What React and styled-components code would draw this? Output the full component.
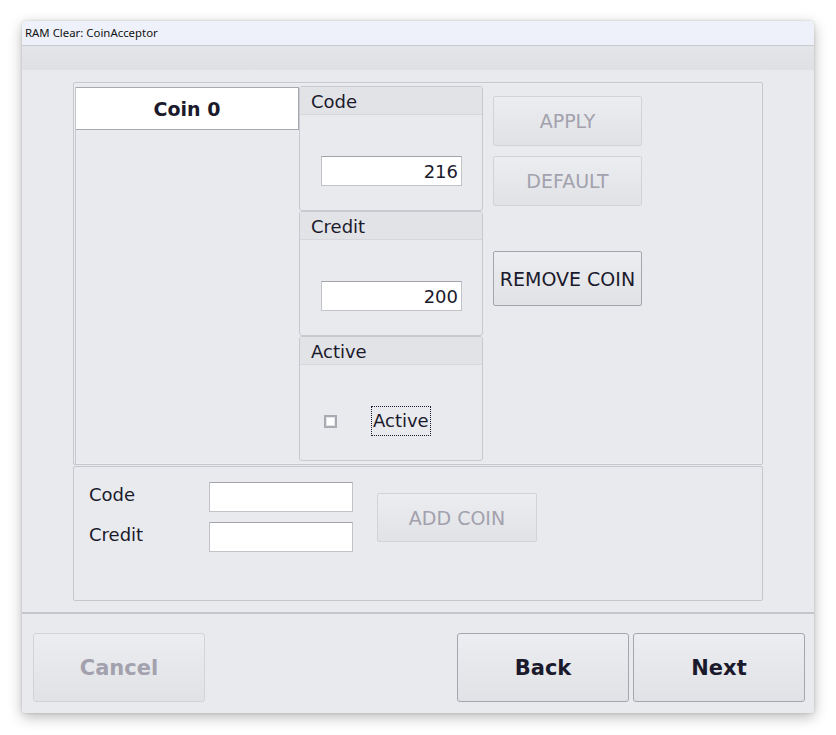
import React from 'react'
import styled, {createGlobalStyle, css} from 'styled-components'

const Global = createGlobalStyle`
  html, body {
    margin: 0;
    background: #ffffff;
  }
  * {
    box-sizing: border-box;
  }
`

const Page = styled.div`
  padding: 21px 22px;
  font-family: "DejaVu Sans", Verdana, sans-serif;
  color: #1b1a2c;
`

const Window = styled.div`
  width: 792px;
  height: 692px;
  background: #e9eaee;
  border-radius: 4px 4px 2px 2px;
  box-shadow: 0 4px 14px rgba(0, 0, 0, 0.28), 0 0 3px rgba(0, 0, 0, 0.15);
  display: flex;
  flex-direction: column;
  overflow: hidden;
`

const TitleBar = styled.div`
  height: 25px;
  flex: none;
  background: #eef1fa;
  border-bottom: 1px solid #c9cad0;
  font-family: "Noto Sans", "Open Sans", sans-serif;
  font-size: 11.4px;
  line-height: 24px;
  padding-left: 3px;
  color: #111;
`

const Band = styled.div`
  height: 24px;
  flex: none;
  background: linear-gradient(#e4e5e9, #dfe0e4);
`

const Body = styled.div`
  flex: 1;
  padding: 12px 51px 0;
  display: flex;
  flex-direction: column;
`

const TopPanel = styled.div`
  height: 383px;
  flex: none;
  border: 1px solid #c6c7cd;
  border-radius: 2px;
  box-shadow: inset 0 0 0 1px #eceef1;
  padding: 3px 1px 0 1px;
  display: grid;
  grid-template-columns: 224px 184px 1fr;
  align-items: start;
`

const CoinList = styled.div`
  margin-top: 1px;
  height: 377px;
  border-left: 1px solid #c6c7cd;
  display: flex;
  flex-direction: column;
`

const CoinItem = styled.div`
  height: 43px;
  background: #ffffff;
  border: 1px solid #a7a8b0;
  border-left: none;
  font-weight: bold;
  font-size: 19px;
  display: flex;
  align-items: center;
  justify-content: center;
  padding-top: 1px;
`

const Groups = styled.div`
  display: flex;
  flex-direction: column;
`

const Group = styled.div`
  height: 125px;
  border: 1px solid #c8c9cf;
  border-radius: 3px;
  display: flex;
  flex-direction: column;
`

const GroupHeader = styled.div`
  height: 28px;
  background: #e2e3e7;
  font-size: 18px;
  line-height: 29px;
  padding-left: 11px;
  border-bottom: 1px solid #d6d7dc;
`

const GroupBody = styled.div`
  flex: 1;
  padding: 41px 0 0 21px;
  display: flex;
  align-items: flex-start;
`

const Field = styled.div`
  width: ${p => p.$w}px;
  height: 30px;
  background: #ffffff;
  border: 1px solid #c2c3c9;
  border-top-color: #a3a4ac;
  font-size: 18px;
  line-height: 29px;
  text-align: right;
  padding-right: 3px;
`

const CheckRow = styled.div`
  display: flex;
  align-items: center;
  padding: 41px 0 0 24px;
`

const CheckBox = styled.span`
  width: 13px;
  height: 13px;
  border: 2px solid #a9aab2;
  background: #ffffff;
  box-shadow: inset 0 0 0 1px #e3e4e8;
`

const CheckLabel = styled.span`
  margin-left: 34px;
  font-size: 18px;
  line-height: 28px;
  padding: 0 1px;
  border: 1px dotted #1b1a2c;
`

const Actions = styled.div`
  padding: 10px 0 0 10px;
  display: flex;
  flex-direction: column;
  align-items: flex-start;
`

const Button = styled.div`
  width: ${p => p.$w}px;
  height: ${p => p.$h}px;
  margin-top: ${p => p.$mt || 0}px;
  margin-left: ${p => p.$ml || 0}px;
  border-radius: 2px;
  display: flex;
  align-items: center;
  justify-content: center;
  font-size: 19px;
  background: linear-gradient(#ecedf0, #e1e2e6);
  ${p => p.$disabled
    ? css`
      color: #a2a1ad;
      border: 1px solid #d2d3d8;
    `
    : css`
      color: #1b1a2c;
      border: 1px solid #a5a6ad;
    `}
`

const BottomPanel = styled.div`
  height: 135px;
  flex: none;
  margin-top: 1px;
  border: 1px solid #c6c7cd;
  border-radius: 2px;
  padding: 15px 0 0 15px;
  display: flex;
  align-items: flex-start;
`

const FormGrid = styled.div`
  display: grid;
  grid-template-columns: 120px 144px;
  row-gap: 10px;
  align-items: center;
`

const Label = styled.div`
  font-size: 18px;
  margin-top: -6px;
`

const Separator = styled.div`
  height: 2px;
  flex: none;
  background: #c5c6cb;
  margin-top: 11px;
`

const Footer = styled.div`
  flex: 1;
  display: flex;
  padding: 19px 9px 0 11px;
  gap: 4px;
`

const BigButton = styled(Button)`
  font-weight: bold;
  font-size: 21px;
  border-radius: 3px;
  ${p => p.$push && css`margin-left: auto;`}
`

export default function App() {
  return (
    <Page>
      <Global />
      <Window>
        <TitleBar>RAM Clear: CoinAcceptor</TitleBar>
        <Band />
        <Body>
          <TopPanel>
            <CoinList>
              <CoinItem>Coin 0</CoinItem>
            </CoinList>
            <Groups>
              <Group>
                <GroupHeader>Code</GroupHeader>
                <GroupBody>
                  <Field $w={141}>216</Field>
                </GroupBody>
              </Group>
              <Group>
                <GroupHeader>Credit</GroupHeader>
                <GroupBody>
                  <Field $w={141}>200</Field>
                </GroupBody>
              </Group>
              <Group>
                <GroupHeader>Active</GroupHeader>
                <CheckRow>
                  <CheckBox />
                  <CheckLabel>Active</CheckLabel>
                </CheckRow>
              </Group>
            </Groups>
            <Actions>
              <Button $w={149} $h={50} $disabled>APPLY</Button>
              <Button $w={149} $h={50} $mt={10} $disabled>DEFAULT</Button>
              <Button $w={149} $h={55} $mt={45}>REMOVE COIN</Button>
            </Actions>
          </TopPanel>
          <BottomPanel>
            <FormGrid>
              <Label>Code</Label>
              <Field $w={144} />
              <Label>Credit</Label>
              <Field $w={144} />
            </FormGrid>
            <Button $w={160} $h={49} $mt={11} $ml={24} $disabled>ADD COIN</Button>
          </BottomPanel>
        </Body>
        <Separator />
        <Footer>
          <BigButton $w={172} $h={69} $disabled>Cancel</BigButton>
          <BigButton $w={172} $h={69} $push>Back</BigButton>
          <BigButton $w={172} $h={69}>Next</BigButton>
        </Footer>
      </Window>
    </Page>
  )
}
